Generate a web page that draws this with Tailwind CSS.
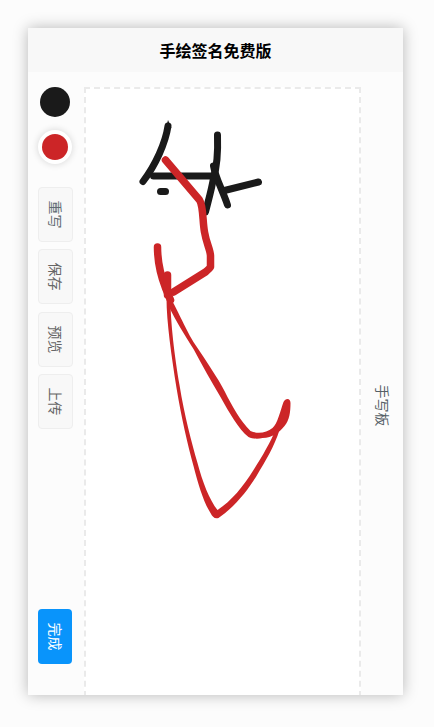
<!DOCTYPE html>
<html lang="zh">
<head>
<meta charset="utf-8">
<script src="https://cdn.jsdelivr.net/npm/@tailwindcss/browser@4"></script>
</head>
<body class="bg-[#fcfcfc] font-['Noto_Sans_CJK_SC','Noto_Sans',sans-serif]">
<div class="w-[434px] h-[727px] pt-[28px] pl-[28px] overflow-hidden">
  <div class="w-[375px] h-[667px] bg-[#fcfcfc] shadow-[0_0_14px_rgba(0,0,0,0.28)] flex flex-col overflow-hidden">
    <header class="h-[44px] shrink-0 bg-[#f8f8f8] flex items-center justify-center text-[16px] leading-none font-bold text-black">手绘签名免费版</header>
    <main class="flex-1 flex pt-[15px] min-h-0">
      <aside class="w-[54px] mr-[1.5px] flex flex-col items-center pb-[31px]">
        <div class="w-[30px] h-[30px] shrink-0 rounded-full bg-[#1a1a1a]"></div>
        <div class="w-[26px] h-[26px] shrink-0 mt-[17px] rounded-full bg-[#cc2527] shadow-[0_0_0_4px_#ffffff,0_0_6px_5px_rgba(0,0,0,0.12)]"></div>
        <div class="mt-[27px] flex flex-col gap-[7.33px]">
          <button class="w-[35px] h-[55px] flex items-center justify-center bg-[#f8f8f8] border border-[#eeeeee] rounded-[4px] text-[14px] text-[#5f6b72]"><span class="rotate-90 whitespace-nowrap">重写</span></button>
          <button class="w-[35px] h-[55px] flex items-center justify-center bg-[#f8f8f8] border border-[#eeeeee] rounded-[4px] text-[14px] text-[#666666]"><span class="rotate-90 whitespace-nowrap">保存</span></button>
          <button class="w-[35px] h-[55px] flex items-center justify-center bg-[#f8f8f8] border border-[#eeeeee] rounded-[4px] text-[14px] text-[#666666]"><span class="rotate-90 whitespace-nowrap">预览</span></button>
          <button class="w-[35px] h-[55px] flex items-center justify-center bg-[#f8f8f8] border border-[#eeeeee] rounded-[4px] text-[14px] text-[#666666]"><span class="rotate-90 whitespace-nowrap">上传</span></button>
        </div>
        <button class="mt-auto w-[34px] h-[55px] shrink-0 flex items-center justify-center bg-[#0994fb] rounded-[4px] text-[14px] text-white"><span class="rotate-90 whitespace-nowrap">完成</span></button>
      </aside>
      <div class="w-[277px] h-[620px] shrink-0 bg-white border-2 border-dashed border-[#eaeaea]">
        <svg class="block" width="273" height="616" viewBox="85.5 89 273 616" fill="none" stroke-linecap="round" stroke-linejoin="round">
          <g stroke="#1a1a1a" stroke-width="7">
            <path d="M167.5 126 C165 143 155 165 142.5 181.5" />
            <path d="M153 176 L212 176" />
            <path d="M160 191.5 L165 191.5" />
            <path d="M217 135 C217.5 150 217 165 213 178 C211 190 208 200 205 212" />
            <path d="M213 166 C215 178 222 190 227 205" />
            <path d="M222 191 L258 182" />
          </g>
          <path d="M167.5 120 L171 128 L165 130 Z" fill="#1a1a1a"/>
          <g stroke="#cc2527" stroke-width="7.5">
            <path d="M165 160 L199 200 C203 206 202 222 204 232 C206 244 210 250 210 256 L210 267 C208 270 207 270 205 272 L173 292" />
            <path d="M157 247 C157 262 160 275 165 288 L170 300" />
            <path d="M167 275 L167 295" />
          </g>
          <path d="M165 290 C174 302 185 330 195 345 C205 360 218 379 224 391 C232 407 240 421 250 431 C257 434 266 433 272 428 C277 424 280 410 283 402 C285 398 290 398 290 403 C290 412 289 420 284 426 C279 432 272 438 262 438 C258 439 252 439 248 437 C238 429 229 413 220 397 C211 382 202 366 193 349 C184 335 176 322 167 304 Z" fill="#cc2527"/>
          <path d="M166 298 L170 300 C170 322 174 356 179 385 C184 416 191 442 197 463 C202 482 209 500 217 510 C231 501 243 486 253 470 C262 456 270 442 275 430 L279 430 C274 446 265 461 256 476 C247 491 234 507 218 518 C214 519 212 517 210 513 C203 502 198 485 193 466 C187 444 181 418 176 388 C171 356 166 322 166 298 Z" fill="#cc2527"/>
        </svg>
      </div>
      <div class="flex-1 flex items-center justify-center text-[14px] text-[#555f66] pt-[28px]"><span class="rotate-90 whitespace-nowrap">手写板</span></div>
    </main>
  </div>
</div>
</body>
</html>
